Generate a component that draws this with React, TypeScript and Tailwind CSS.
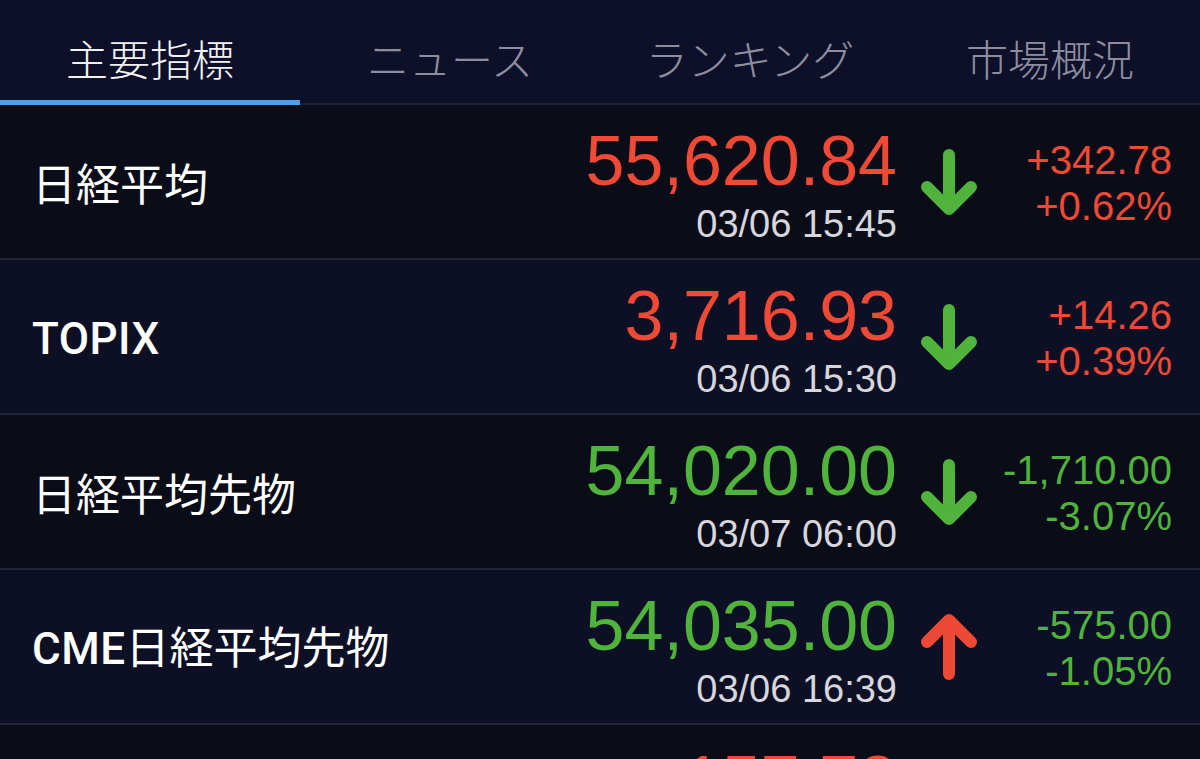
import React from 'react';

type Quote = {
  name: string;
  price: string;
  time: string;
  change: string;
  rate: string;
  up: boolean; // colour of price/change
  arrow: 'up' | 'down';
};

const quotes: Quote[] = [
  { name: '日経平均', price: '55,620.84', time: '03/06 15:45', change: '+342.78', rate: '+0.62%', up: true, arrow: 'down' },
  { name: 'TOPIX', price: '3,716.93', time: '03/06 15:30', change: '+14.26', rate: '+0.39%', up: true, arrow: 'down' },
  { name: '日経平均先物', price: '54,020.00', time: '03/07 06:00', change: '-1,710.00', rate: '-3.07%', up: false, arrow: 'down' },
  { name: 'CME日経平均先物', price: '54,035.00', time: '03/06 16:39', change: '-575.00', rate: '-1.05%', up: false, arrow: 'up' },
  { name: '米ドル/円', price: '157.72', time: '03/07 06:59', change: '+0.15', rate: '+0.10%', up: true, arrow: 'up' },
];

const tabs = ['主要指標', 'ニュース', 'ランキング', '市場概況'];

function Arrow({ dir }: { dir: 'up' | 'down' }) {
  const color = dir === 'down' ? '#4fb33c' : '#ef4834';
  return (
    <svg width="60" height="68" viewBox="0 0 60 68" fill="none">
      {dir === 'down' ? (
        <>
          <path d="M30 7V60" stroke={color} strokeWidth="12" strokeLinecap="round" />
          <path d="M8 39L30 61L52 39" stroke={color} strokeWidth="12" strokeLinecap="round" strokeLinejoin="round" />
        </>
      ) : (
        <>
          <path d="M30 61V8" stroke={color} strokeWidth="12" strokeLinecap="round" />
          <path d="M8 29L30 7L52 29" stroke={color} strokeWidth="12" strokeLinecap="round" strokeLinejoin="round" />
        </>
      )}
    </svg>
  );
}

// latin runs are a bit heavier than the kanji in the original
function Name({ text }: { text: string }) {
  const parts = text.split(/([A-Za-z]+)/).filter(Boolean);
  return (
    <>
      {parts.map((p, i) =>
        /^[A-Za-z]+$/.test(p) ? (
          <span key={i} className="font-medium tracking-[0.5px] [font-family:Roboto,'Liberation_Sans',sans-serif]">
            {p}
          </span>
        ) : (
          <span key={i} className="font-normal">
            {p}
          </span>
        )
      )}
    </>
  );
}

function QuoteRow({ q, index }: { q: Quote; index: number }) {
  const tone = q.up ? 'text-[#f04a36]' : 'text-[#4fb33c]';
  const bg = index % 2 === 0 ? 'bg-[#0a0c18]' : 'bg-[#0d1025]';
  return (
    <div className={`flex h-[155px] shrink-0 items-center border-b-2 border-[#222539] pl-[32px] pr-[28px] ${bg}`}>
      <div className="flex-1 text-[44px] text-white [font-family:'Noto_Sans_CJK_JP',sans-serif]">
        <Name text={q.name} />
      </div>
      <div className="mt-[21px] flex flex-col items-end self-start">
        <div className={`text-[70px] leading-[70px] ${tone}`}>{q.price}</div>
        <div className="text-[38px] leading-[56px] text-[#d6d6dc]">{q.time}</div>
      </div>
      <div className="flex w-[104px] justify-center">
        <Arrow dir={q.arrow} />
      </div>
      <div className={`mt-[32px] flex w-[171px] flex-col items-end self-start text-[40px] leading-[46px] ${tone}`}>
        <div>{q.change}</div>
        <div>{q.rate}</div>
      </div>
    </div>
  );
}

export default function App() {
  return (
    <div className="flex h-[759px] w-[1200px] flex-col overflow-hidden bg-[#0a0c18] [font-family:'Liberation_Sans',Arial,sans-serif]">
      <div className="flex h-[105px] shrink-0 border-b-2 border-[#1f2236] bg-[#0e1029]">
        {tabs.map((t, i) => (
          <div key={t} className="relative flex flex-1 items-center justify-center pt-[12px]">
            <span
              className={`text-[42px] font-light [font-family:'Noto_Sans_CJK_JP',sans-serif] ${
                i === 0 ? 'text-[#f2f2f5]' : 'text-[#8c8ea0]'
              }`}
            >
              {t}
            </span>
            {i === 0 && <div className="absolute bottom-[-2px] left-0 h-[5px] w-full bg-[#4a9fe9]" />}
          </div>
        ))}
      </div>
      {quotes.map((q, i) => (
        <QuoteRow key={q.name} q={q} index={i} />
      ))}
    </div>
  );
}
